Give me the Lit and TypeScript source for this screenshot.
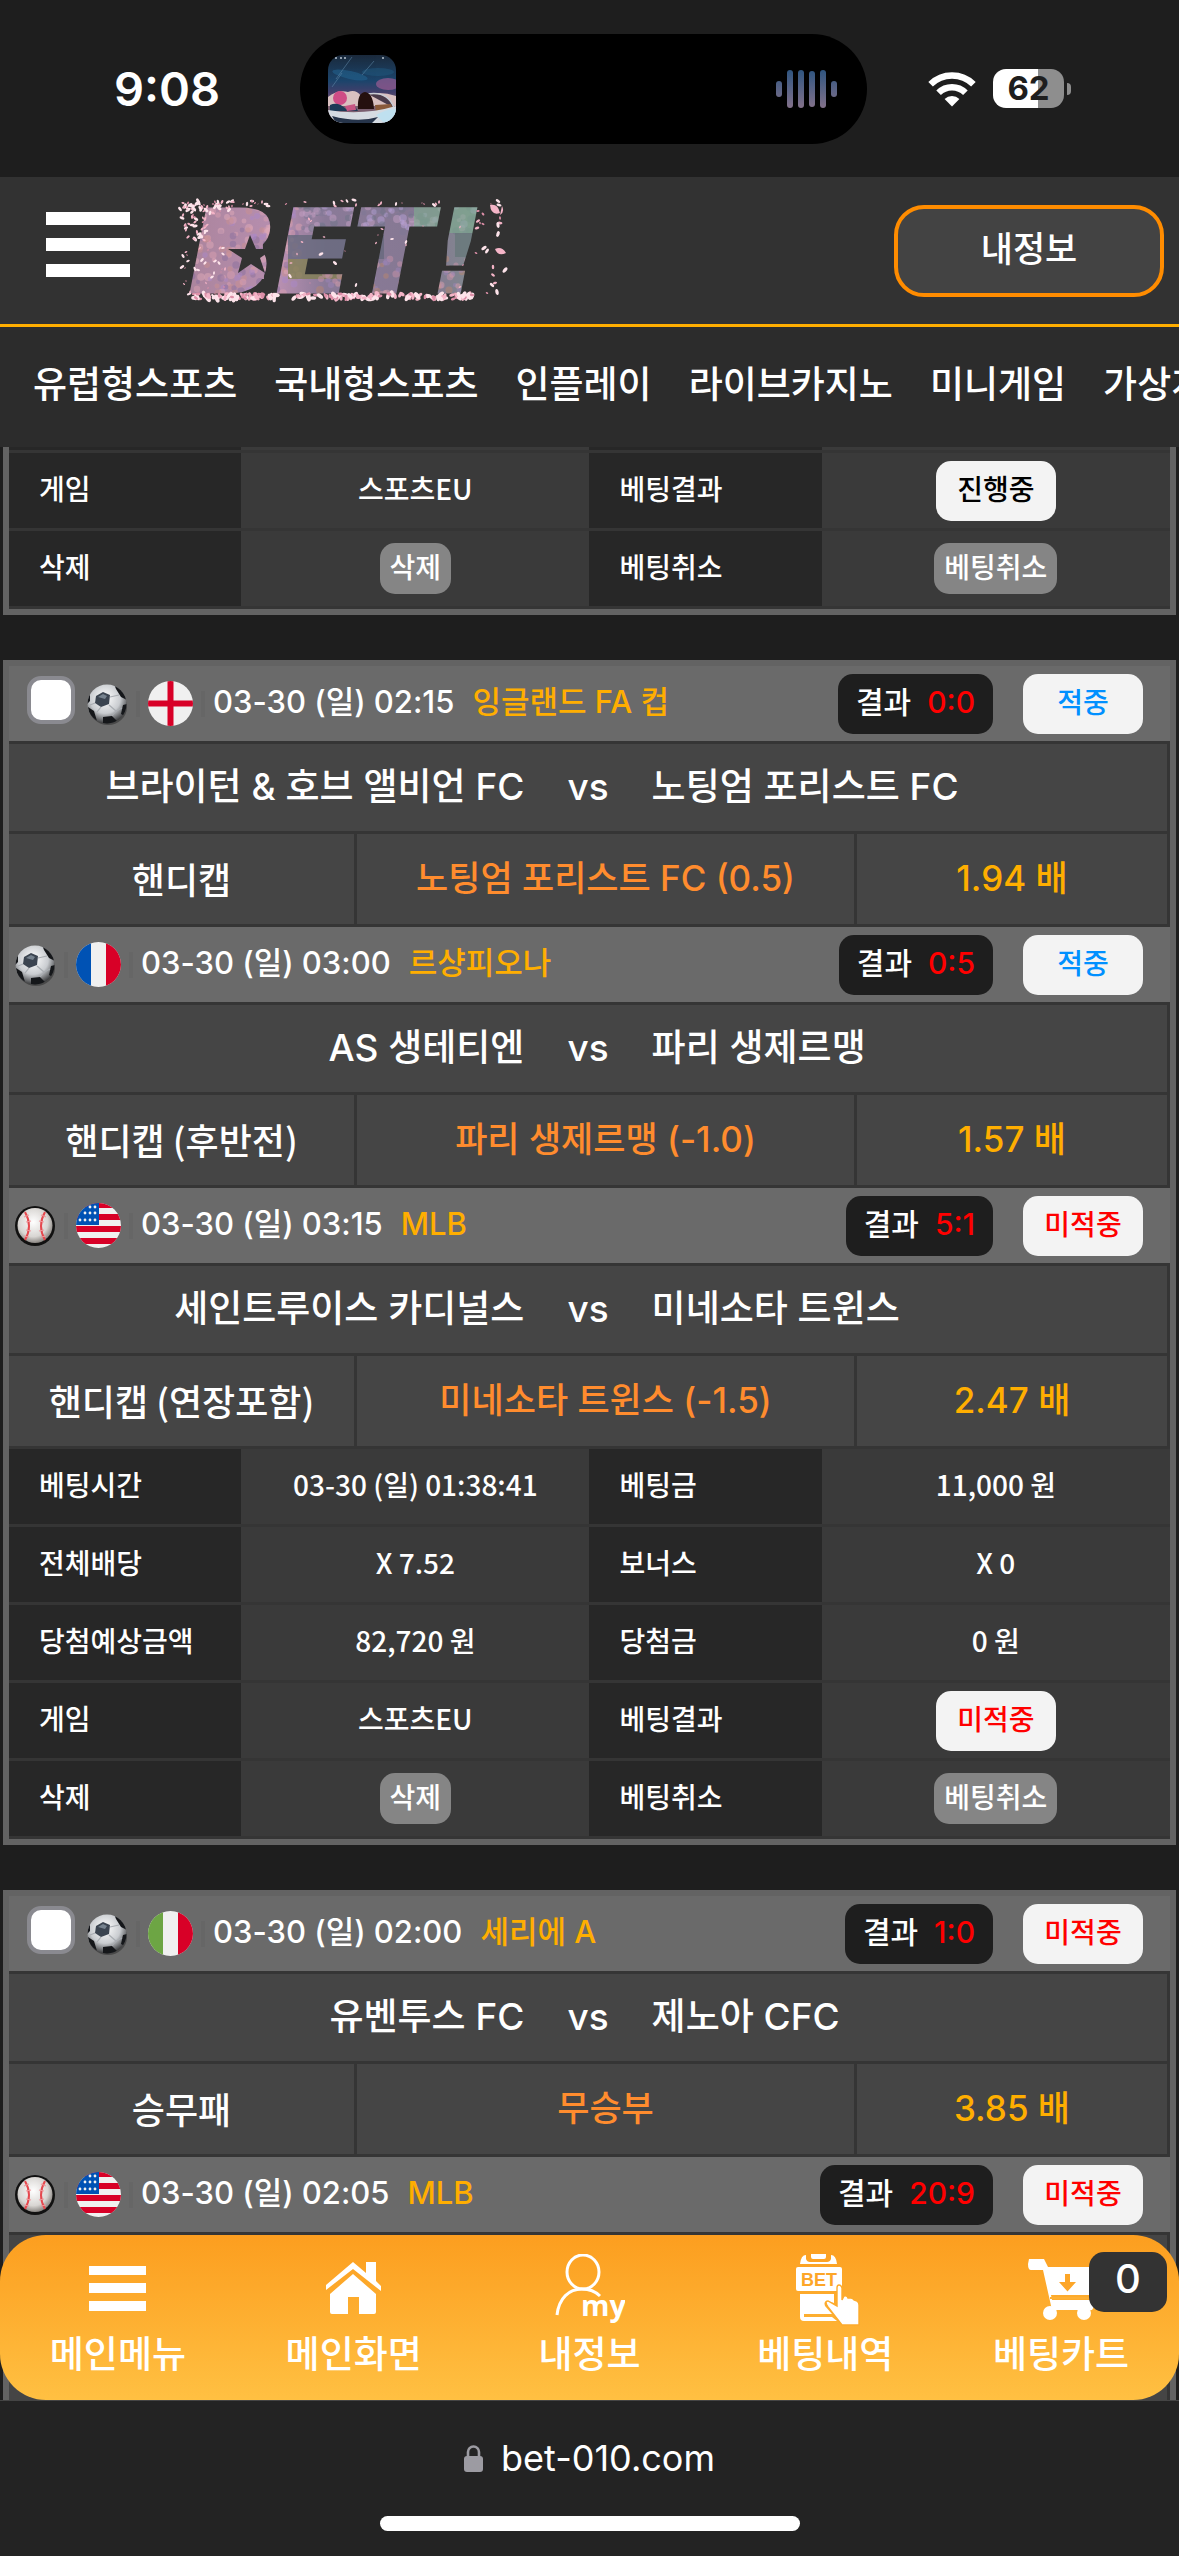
import { LitElement, html, svg, css, nothing } from "lit";
import { customElement } from "lit/decorators.js";

type Sport = "soccer" | "baseball";
type Flag = "england" | "france" | "usa" | "italy";

interface Game {
  sport: Sport;
  flag: Flag;
  date: string;
  league: string;
  score: string;
  won: boolean;
  home?: string;
  away?: string;
  type?: string;
  pick?: string;
  odds?: string;
  selectable?: boolean;
}

const NAV = ["유럽형스포츠", "국내형스포츠", "인플레이", "라이브카지노", "미니게임", "가상게임"];

const SLIP_ONE: Game[] = [
  { sport: "soccer", flag: "england", date: "03-30 (일) 02:15", league: "잉글랜드 FA 컵", score: "0:0", won: true, home: "브라이턴 & 호브 앨비언 FC", away: "노팅엄 포리스트 FC", type: "핸디캡", pick: "노팅엄 포리스트 FC (0.5)", odds: "1.94 배", selectable: true },
  { sport: "soccer", flag: "france", date: "03-30 (일) 03:00", league: "르샹피오나", score: "0:5", won: true, home: "AS 생테티엔", away: "파리 생제르맹", type: "핸디캡 (후반전)", pick: "파리 생제르맹 (-1.0)", odds: "1.57 배" },
  { sport: "baseball", flag: "usa", date: "03-30 (일) 03:15", league: "MLB", score: "5:1", won: false, home: "세인트루이스 카디널스", away: "미네소타 트윈스", type: "핸디캡 (연장포함)", pick: "미네소타 트윈스 (-1.5)", odds: "2.47 배" },
];

const SLIP_TWO: Game[] = [
  { sport: "soccer", flag: "italy", date: "03-30 (일) 02:00", league: "세리에 A", score: "1:0", won: false, home: "유벤투스 FC", away: "제노아 CFC", type: "승무패", pick: "무승부", odds: "3.85 배", selectable: true },
  { sport: "baseball", flag: "usa", date: "03-30 (일) 02:05", league: "MLB", score: "20:9", won: false },
];

const AMOUNTS = [
  ["베팅시간", "03-30 (일) 01:38:41", "베팅금", "11,000 원"],
  ["전체배당", "X 7.52", "보너스", "X 0"],
  ["당첨예상금액", "82,720 원", "당첨금", "0 원"],
];

/* Small repeatable generator, so the petals fall the same way on every render. */
function scatter(seed: number, n: number, x0: number, x1: number, y0: number, y1: number) {
  let s = seed;
  const next = () => (s = (s * 16807) % 2147483647) / 2147483647;
  return Array.from({ length: n }, () => ({
    x: Math.round(x0 + next() * (x1 - x0)),
    y: Math.round(y0 + next() * (y1 - y0)),
    k: next(),
    a: Math.round(next() * 180),
  }));
}

const petals = (list: ReturnType<typeof scatter>, r: number) =>
  list.map((p) => svg`<ellipse cx=${p.x} cy=${p.y} rx=${r + p.k * 2} ry=${r * 0.6 + p.k}
    fill=${p.k > 0.6 ? "#fde3ea" : p.k > 0.3 ? "#f3b3c6" : "#dd8fa8"} transform=${`rotate(${p.a} ${p.x} ${p.y})`}></ellipse>`);

const blots = (list: ReturnType<typeof scatter>, colors: string[], r: number) =>
  list.map((p) => svg`<circle cx=${p.x} cy=${p.y} r=${r + p.k * r} fill=${colors[p.a % colors.length]} opacity="0.5"></circle>`);

const logo = html`<svg class="logo" viewBox="0 0 345 108" role="img" aria-label="BET!">
  <defs>
    <linearGradient id="lg" x1="0" y1="0" x2="1" y2="0">
      <stop offset="0" stop-color="#a98299"></stop><stop offset=".32" stop-color="#b78fb0"></stop>
      <stop offset=".45" stop-color="#8a7a98"></stop><stop offset=".75" stop-color="#857892"></stop>
      <stop offset="1" stop-color="#7c9a8c"></stop>
    </linearGradient>
    <pattern id="blossom" patternUnits="userSpaceOnUse" width="345" height="108">
      <rect width="345" height="108" fill="url(#lg)"></rect>
      ${blots(scatter(11, 190, 20, 130, 8, 98), ["#d9a0b0", "#a988c8", "#e0a9b8", "#8a6f9e", "#c98f8f"], 2)}
      ${blots(scatter(23, 150, 130, 310, 8, 36), ["#b59fd6", "#7d7896", "#c3a0c4", "#6f7388"], 2)}
      <rect x="118" y="38" width="96" height="24" fill="#66697d" opacity=".8"></rect>
      <rect x="118" y="62" width="60" height="20" fill="#827f52" opacity=".8"></rect>
      ${blots(scatter(37, 130, 150, 320, 62, 98), ["#d8a0ac", "#c792a8", "#9c84b8", "#b8866f"], 2)}
      <rect x="244" y="6" width="90" height="30" fill="#7faf8f" opacity=".6"></rect>
      <rect x="285" y="36" width="40" height="24" fill="#68787a" opacity=".8"></rect>
    </pattern>
  </defs>
  <text class="logo-text" x="19" y="95" fill="url(#blossom)" stroke="url(#blossom)" stroke-width="3">BET!</text>
  <polygon points="54,22 92,22 94,82 42,82" fill="url(#blossom)"></polygon>
  <polygon points="80,38 86,52 103,52 90,61 95,76 81,67 68,76 72,61 58,52 75,52" fill="#323232"></polygon>
  ${petals(scatter(5, 46, 10, 62, 4, 16), 1)}
  ${petals(scatter(9, 34, 12, 40, 16, 44), 1)}
  ${petals(scatter(41, 34, 12, 56, 50, 100), 0.6)}
  ${petals(scatter(17, 34, 62, 330, 3, 9), 0.7)}
  ${petals(scatter(29, 22, 120, 310, 22, 92), 0.6)}
  ${petals(scatter(57, 20, 306, 336, 14, 98), 1.3)}
  ${petals(scatter(61, 64, 24, 106, 97, 102), 2)}
  ${petals(scatter(67, 64, 124, 210, 97, 102), 2)}
  ${petals(scatter(71, 60, 218, 302, 97, 102), 2)}
  <path d="M320 8q8-2 10 8q-9 3-10-8z M332 9q3 6-2 9z M325 52q7-3 11 4q-8 4-11-4z" fill="#f5b5c8"></path>
</svg>`;

const cover = html`<svg class="cover" viewBox="0 0 68 68" aria-hidden="true">
  <defs>
    <linearGradient id="sky" x1="0" y1="0" x2="0" y2="1">
      <stop offset="0" stop-color="#1b2a3c"></stop><stop offset=".38" stop-color="#1c456c"></stop>
      <stop offset=".55" stop-color="#433f6b"></stop><stop offset=".7" stop-color="#7a5f70"></stop>
    </linearGradient>
    <clipPath id="cc"><rect width="68" height="68" rx="15"></rect></clipPath>
  </defs>
  <g clip-path="url(#cc)">
    <rect width="68" height="68" fill="url(#sky)"></rect>
    <ellipse cx="22" cy="20" rx="18" ry="4" fill="#23628e" opacity=".6" transform="rotate(12 22 20)"></ellipse>
    <ellipse cx="50" cy="17" rx="16" ry="4" fill="#1f5a80" opacity=".5"></ellipse>
    <ellipse cx="60" cy="29" rx="12" ry="6" fill="#9a5b93" opacity=".7"></ellipse>
    <path d="M8 24L24 2M4 32L14 18M34 20L46 6" stroke="#5d86a6" stroke-width=".8" opacity=".7"></path>
    <path d="M0 42q10-8 20-5q8-3 13 4q18-6 35 0v10H0z" fill="#d9c0c0"></path>
    <path d="M40 39q20-3 26 14" stroke="#c9ccd4" stroke-width="1.5" fill="#4b3b4a"></path>
    <circle cx="12" cy="43" r="7" fill="#cf4c86"></circle>
    <path d="M2 50q8-4 16 4l8-4l4 6H2z" fill="#1d3a56"></path>
    <path d="M17 51l10-2l1 6l-9 1z" fill="#c75583"></path>
    <path d="M30 54q-1-16 7-17q8 1 9 17z" fill="#25100f"></path>
    <path d="M47 50l16-1l2 5l-17 3z" fill="#8a5a3a"></path>
    <path d="M0 55q34 6 68-4v17H0z" fill="#d5dbe2"></path>
    <path d="M4 61q26 7 46 1l-6 6H8z" fill="#26344a"></path>
    <path d="M48 60q10-6 20-6v14H56z" fill="#bfe0ef"></path>
    <path d="M7 3h2M12 3h2M16 3h2M54 3h2" stroke="#b8c4cf" stroke-width="1.4"></path>
  </g>
</svg>`;

const wave = html`<svg class="wave" viewBox="0 0 62 38" aria-hidden="true">
  <defs><linearGradient id="wv" gradientUnits="userSpaceOnUse" x1="0" y1="0" x2="0" y2="38">
    <stop offset="0" stop-color="#2f5580"></stop><stop offset="1" stop-color="#83718a"></stop></linearGradient></defs>
  <g fill="url(#wv)">
    <rect x="0" y="11" width="6" height="16" rx="3"></rect><rect x="11" y="0" width="6" height="38" rx="3"></rect>
    <rect x="22" y="0" width="6" height="38" rx="3"></rect><rect x="33" y="1" width="6" height="36" rx="3"></rect>
    <rect x="44" y="0" width="6" height="38" rx="3"></rect><rect x="55" y="11" width="6" height="16" rx="3"></rect>
  </g>
</svg>`;

const wifi = html`<svg class="wifi" viewBox="0 0 48 36" role="img" aria-label="Wi-Fi">
  <g fill="none" stroke="#fff" stroke-width="6.5">
    <path d="M2.6 13.3a30.5 30.5 0 0 1 42.8 0"></path>
    <path d="M10.6 21.8a19 19 0 0 1 26.8 0"></path>
  </g>
  <path d="M24 35.5l-7.4-7.4a10.5 10.5 0 0 1 14.8 0z" fill="#fff"></path>
</svg>`;

const ball = (sport: Sport) =>
  sport === "soccer"
    ? html`<svg class="ball" viewBox="0 0 42 42" role="img" aria-label="축구">
        <defs><radialGradient id="sb" cx=".45" cy=".35" r=".65"><stop offset="0" stop-color="#fff"></stop>
          <stop offset=".6" stop-color="#c9ccd0"></stop><stop offset="1" stop-color="#3a3b3d"></stop></radialGradient>
          <clipPath id="sc"><circle cx="21" cy="21" r="19.5"></circle></clipPath></defs>
        <ellipse cx="22" cy="24" rx="19" ry="18" fill="#222" opacity=".45"></ellipse>
        <circle cx="21" cy="21" r="19.5" fill="url(#sb)"></circle>
        <g clip-path="url(#sc)">
          <path d="M10 13l7-4l7 3l-1 9l-8 3l-6-4z" fill="#3b4450"></path>
          <path d="M12 14l5-3l4 2l-2 3z" fill="#76828e"></path>
          <path d="M28 1l10 6l3 10l-6-3l-5-8z M41 21v13l-6-3l2-9z M2 24l6 4l3 10l-7-2z M17 34l9-1l5 5l-6 4h-8z M0 12l4-2v8l-4 4z" fill="#15171a"></path>
          <path d="M24 14l9-2M23 22l7 6l6-3M30 28l-4 5M15 24l-4 5M9 20l-5 2" stroke="#a9adb2" stroke-width="1.2" fill="none"></path>
        </g>
      </svg>`
    : html`<svg class="ball" viewBox="0 0 42 42" role="img" aria-label="야구">
        <defs><radialGradient id="bb" cx=".45" cy=".4" r=".6"><stop offset="0" stop-color="#fff"></stop>
          <stop offset=".7" stop-color="#d8d5d2"></stop><stop offset="1" stop-color="#8b8783"></stop></radialGradient></defs>
        <circle cx="21" cy="21" r="20" fill="#111"></circle>
        <circle cx="21" cy="20.5" r="17.5" fill="url(#bb)"></circle>
        <path d="M11 7q8 14 0 28M31 7q-8 14 0 28" fill="none" stroke="#e5484e" stroke-width="2"></path>
        <path d="M10 12l5-2M12 17l5-1M12 25l5 1M10 31l5 1M32 12l-5-2M30 17l-5-1M30 25l-5 1M32 31l-5 1" stroke="#f0979b" stroke-width="1.2"></path>
      </svg>`;

const flag = (name: Flag) => {
  const tri = (a: string) => svg`<rect width="45" height="45" fill="#f0f0f0"></rect><rect width="15" height="45" fill=${a}></rect><rect x="30" width="15" height="45" fill="#d80027"></rect>`;
  const art = {
    england: svg`<rect width="45" height="45" fill="#f0f0f0"></rect><path d="M19.5 0h6v19.5H45v6H25.5V45h-6V25.5H0v-6h19.5z" fill="#d80027"></path>`,
    france: tri("#0052b4"),
    italy: tri("#6da544"),
    usa: svg`<rect width="45" height="45" fill="#f0f0f0"></rect>
      ${[0, 1, 2, 3].map((i) => svg`<rect y=${i * 12 - 1} width="45" height="6" fill="#d80027"></rect>`)}
      <rect width="23" height="22" fill="#0052b4"></rect>
      ${[[14, 4], [19, 4], [9, 10], [14, 10], [19, 10], [4, 17], [9, 17], [14, 17], [19, 17]].map(([x, y]) => svg`<circle cx=${x} cy=${y} r="1.4" fill="#f0f0f0"></circle>`)}`,
  }[name];
  return html`<svg class="flag" viewBox="0 0 45 45" role="img" aria-label=${name}>${art}</svg>`;
};

const dockIcons = {
  menu: svg`<path d="M7 12h57v9H7zM7 29h57v10H7zM7 47h57v10H7z" fill="#fff"></path>`,
  home: svg`<path d="M8 36v-5L35 8l13 11V8h10v19l5 5v5L35 15z" fill="#fff"></path>
    <path d="M35 20l23 20v18q0 2-2 2H41V43H30v17H14q-2 0-2-2V40z" fill="#fff"></path>`,
  person: svg`<g fill="none" stroke="#fff" stroke-width="3"><ellipse cx="29" cy="18" rx="16" ry="17"></ellipse>
    <path d="M3 61c2-17 12-26 25-26c9 0 14 3 18 7"></path></g>
    <text x="27" y="62" class="my">my</text>`,
  ticket: svg`<path d="M10 10q1-9 6-9v4q1 3 4 3h17q3 0 4-3V1q5 0 6 9zM21 0h15v3q0 2-2 2H23q-2 0-2-2z" fill="#fff"></path>
    <rect x="6" y="13" width="46" height="24" rx="2" fill="#fff"></rect>
    <text x="11" y="32" class="bet-mark">BET</text>
    <path d="M10 40h34v9l-6-2q-5 0-3 5l7 8H14v3h28l5 4H14q-4 0-4-4z" fill="#fff"></path>
    <path d="M47 34q0-3 2-3t3 3v12l2-4q3-1 4 2l3 0q2 0 3 2l3 1q2 1 2 4v20H52l-14-18q-4-6 0-6l9 5z" fill="#fff" stroke="#fdab2c" stroke-width="1.4"></path>`,
  cart: svg`<path d="M3 5h15l4 8h52v28H25l1 5h38q6 0 5 5l-3 5H26l-9-40H5q-3 0-3-6z" fill="#fff"></path>
    <path d="M24 44h46" stroke="#fdb035" stroke-width="2"></path>
    <circle cx="24" cy="59" r="7" fill="#fff"></circle><circle cx="58" cy="59" r="7" fill="#fff"></circle>
    <path d="M39 20h5v8h6L41.500 37.500 33 28h6z" fill="#fda628"></path>`,
};

const DOCK: { icon: keyof typeof dockIcons; label: string; count?: string }[] = [
  { icon: "menu", label: "메인메뉴" },
  { icon: "home", label: "메인화면" },
  { icon: "person", label: "내정보" },
  { icon: "ticket", label: "베팅내역" },
  { icon: "cart", label: "베팅카트", count: "0" },
];

@customElement("app-root")
export class AppRoot extends LitElement {
  static styles = css`
    :host {
      --kr: "Noto Sans CJK KR", "Noto Sans", sans-serif;
      --wide: Inter, "Noto Sans CJK KR", sans-serif;
      --line: #353535;
      display: flex;
      flex-direction: column;
      min-height: 100vh;
      background: #1e1e1e;
      color: #fff;
      font-family: var(--kr);
      font-size: 28px;
      font-weight: 500;
      overflow: hidden;
    }
    * { box-sizing: border-box; }
    a { color: inherit; text-decoration: none; }
    button { font: inherit; color: inherit; border: 0; padding: 0; margin: 0; }
    svg { display: block; flex: none; }

    .status { display: grid; grid-template-columns: 300px 567px 1fr; align-items: center; height: 177px; }
    .time { justify-self: center; margin-left: 34px; font: 600 47px/1 Inter, sans-serif; }
    .island { display: flex; align-items: center; justify-content: space-between; height: 110px; padding: 0 29px 0 28px; border-radius: 55px; background: #000; }
    .cover { width: 68px; height: 68px; }
    .wave { width: 62px; height: 38px; }
    .signals { display: flex; align-items: center; gap: 17px; padding-left: 61px; }
    .wifi { width: 48px; height: 36px; }
    .battery { display: flex; align-items: center; gap: 3px; }
    .cell { width: 71px; height: 39px; border-radius: 13px; background: linear-gradient(90deg, #fff 63%, #8e8e8e 63%); color: #1e1e1e; font: 700 33px/39px Inter, sans-serif; text-align: center; }
    .nub { width: 4px; height: 12px; border-radius: 0 6px 6px 0; background: #8e8e8e; }

    .top { display: flex; align-items: center; gap: 40px; height: 150px; padding: 0 15px 0 46px; background: #323232; border-bottom: 3px solid #ffae00; }
    .burger { display: grid; gap: 13px; width: 84px; padding-bottom: 13px; background: none; }
    .burger span { height: 13px; background: #fff; }
    .logo { width: 345px; height: 108px; overflow: visible; }
    .logo-text { font: italic 700 114px "DejaVu Sans", sans-serif; }
    .mine { width: 270px; height: 92px; margin-left: auto; padding-bottom: 8px; border: 4px solid #ff8c00; border-radius: 30px; background: #434343; font-size: 35px; }

    .menu { display: flex; gap: 37px; height: 120px; padding: 0 33px 10px; align-items: center; background: #2c2c2c; font-size: 37px; line-height: 48px; white-space: nowrap; overflow: hidden; }

    .view { position: relative; flex: 1; display: flex; flex-direction: column; gap: 45px; padding: 0 3px; }
    .slip { border: 6px solid #636363; background: #454545; }
    .slip.above { border-top: 0; }
    .slip.below { display: flex; flex-direction: column; flex: 1; border-bottom: 0; }

    .head { display: flex; align-items: center; gap: 8px; height: 78px; padding: 0 27px 0 5px; background: #6a6a6a; border-bottom: 3px solid var(--line); font: 500 31px/44px var(--wide); white-space: nowrap; }
    .tick { appearance: none; width: 48px; height: 48px; margin: 0 3px 8px 13px; border: 4px solid #8a8a90; border-radius: 14px; background: #fff; }
    .ball { width: 42px; height: 42px; }
    .flag { width: 45px; height: 45px; border-radius: 50%; }
    .bar { width: 4px; height: 26px; background: #666; }
    .when { padding-bottom: 4px; }
    .league { flex: 1; padding: 0 0 4px 10px; color: #ffae00; }
    .score { display: flex; gap: 16px; height: 60px; padding: 6px 18px; margin-right: 22px; border-radius: 15px; background: #1e1e1e; font-size: 30px; }
    .score b { font-weight: 500; color: #f00; }
    .pill { display: inline-flex; align-items: center; justify-content: center; width: 120px; height: 60px; padding-bottom: 6px; border-radius: 15px; background: #f3f3f3; color: #000; font: 500 28px/40px var(--kr); vertical-align: middle; }
    .pill.hit { color: #0090ff; }
    .pill.miss { color: #f00; }

    .match, .bet { border-right: 3px solid var(--line); border-bottom: 3px solid var(--line); background: #454545; font-size: 36px; white-space: nowrap; }
    .match { display: grid; grid-template-columns: 1fr auto 1fr; gap: 43px; align-items: center; height: 90px; padding-bottom: 2px; font-family: var(--wide); font-size: 37px; line-height: 48px; }
    .match .home { text-align: right; }
    .bet { display: grid; grid-template-columns: 345fr 500fr 313fr; height: 93px; text-align: center; line-height: 88px; }
    .bet span + span { border-left: 3px solid var(--line); }
    .pick, .odds { font-family: var(--wide); font-size: 35px; }
    .pick { color: #ff8c2e; }
    .odds { color: #ffae00; }
    .hidden-part { flex: 1; min-height: 165px; border-right: 3px solid var(--line); background: #454545; }

    table { width: 100%; table-layout: fixed; border-collapse: separate; border-spacing: 0; }
    th, td { height: 78px; padding: 0; border-bottom: 3px solid #353535; line-height: 40px; font-weight: 500; white-space: nowrap; }
    th { width: 20%; padding: 0 0 5px 30px; background: #272727; text-align: left; }
    td { width: 30%; background: #3a3a3a; text-align: center; }
    .val { padding-bottom: 5px; }
    .peek td, .peek th { height: 6px; padding: 0; }
    .small { height: 51px; padding: 0 10px 5px; border-radius: 15px; background: #858585; line-height: 40px; vertical-align: middle; }

    .dock { position: absolute; left: 0; right: 0; bottom: 0; display: grid; grid-template-columns: repeat(5, 1fr); height: 165px; border-radius: 46px; background: linear-gradient(#fc9e1f, #ffc042); }
    .dock a { position: relative; display: flex; flex-direction: column; align-items: center; padding-top: 19px; font-size: 37px; line-height: 48px; }
    .dock svg { width: 71px; height: 72px; margin-bottom: 2px; }
    .my { font: 700 29px "Open Sans", sans-serif; fill: #fff; }
    .bet-mark { font: 700 18px "Liberation Sans", sans-serif; fill: #fda628; }
    .count { position: absolute; top: 17px; right: 12px; width: 78px; height: 60px; border-radius: 15px; background: #333; font: 500 40px/54px var(--wide); text-align: center; }

    .browser { display: flex; flex-direction: column; align-items: center; gap: 35px; height: 156px; padding-top: 34px; border-top: 1px solid #444; background: #232323; }
    .address { display: flex; align-items: center; gap: 18px; font: 400 36px/46px Inter, sans-serif; }
    .lock { width: 19px; height: 28px; }
    .handle { width: 420px; height: 15px; border-radius: 8px; background: #fff; }
  `;

  private head(g: Game) {
    return html`<div class="head">
      ${g.selectable ? html`<input class="tick" type="checkbox" aria-label="선택" />` : nothing}
      ${ball(g.sport)}<span class="bar"></span>${flag(g.flag)}<span class="bar"></span>
      <span class="when">${g.date}</span><span class="league">${g.league}</span>
      <span class="score"><span>결과</span><b>${g.score}</b></span>
      <span class="pill ${g.won ? "hit" : "miss"}">${g.won ? "적중" : "미적중"}</span>
    </div>`;
  }

  private game(g: Game) {
    return html`${this.head(g)}
      ${g.home
        ? html`<div class="match"><span class="home">${g.home}</span><span>vs</span><span>${g.away}</span></div>
            <div class="bet"><span>${g.type}</span><span class="pick">${g.pick}</span><span class="odds">${g.odds}</span></div>`
        : nothing}`;
  }

  private closing(result: string, tone: string) {
    return html`<tr><th>게임</th><td class="val">스포츠EU</td><th>베팅결과</th><td><span class="pill ${tone}">${result}</span></td></tr>
      <tr><th>삭제</th><td><button class="small">삭제</button></td><th>베팅취소</th><td><button class="small">베팅취소</button></td></tr>`;
  }

  render() {
    return html`
      <div class="status">
        <span class="time">9:08</span>
        <div class="island">${cover}${wave}</div>
        <div class="signals">${wifi}<div class="battery"><span class="cell">62</span><span class="nub"></span></div></div>
      </div>
      <header class="top">
        <button class="burger" aria-label="메뉴"><span></span><span></span><span></span></button>
        ${logo}
        <button class="mine">내정보</button>
      </header>
      <nav class="menu">${NAV.map((n) => html`<a href="#">${n}</a>`)}</nav>
      <main class="view">
        <section class="slip above">
          <table><tbody>
            <tr class="peek"><th></th><td></td><th></th><td></td></tr>
            ${this.closing("진행중", "")}
          </tbody></table>
        </section>
        <section class="slip">
          ${SLIP_ONE.map((g) => this.game(g))}
          <table><tbody>
            ${AMOUNTS.map(([a, b, c, d]) => html`<tr><th>${a}</th><td class="val">${b}</td><th>${c}</th><td class="val">${d}</td></tr>`)}
            ${this.closing("미적중", "miss")}
          </tbody></table>
        </section>
        <section class="slip below">
          ${SLIP_TWO.map((g) => this.game(g))}
          <div class="hidden-part"></div>
        </section>
        <nav class="dock">
          ${DOCK.map((d) => html`<a href="#"><svg viewBox="0 0 71 72" aria-hidden="true">${dockIcons[d.icon]}</svg>${d.label}
            ${d.count ? html`<span class="count">${d.count}</span>` : nothing}</a>`)}
        </nav>
      </main>
      <footer class="browser">
        <div class="address">
          <svg class="lock" viewBox="0 0 19 28" aria-hidden="true"><path d="M4 13V8a5.500 5.500 0 0 1 11 0v5" fill="none" stroke="#9c9ba2" stroke-width="2.600"></path><rect y="12" width="19" height="16" rx="3" fill="#9c9ba2"></rect></svg>
          <span>bet-010.com</span>
        </div>
        <span class="handle"></span>
      </footer>`;
  }
}
